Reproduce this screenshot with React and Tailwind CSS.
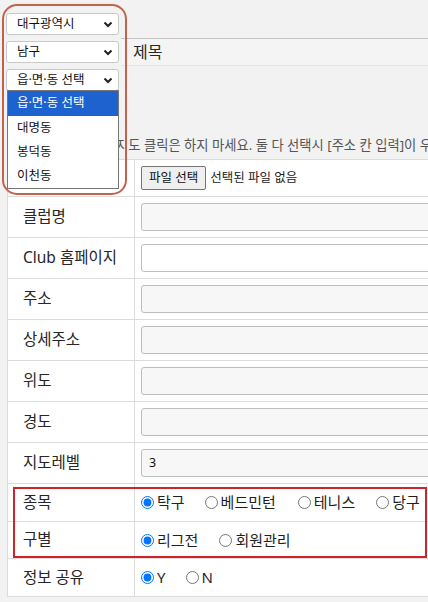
import React from "react";

const font = { fontFamily: '"Noto Sans", "Noto Sans CJK KR", sans-serif' };

const Chevron = () => (
  <svg width="10" height="7" viewBox="0 0 10 7" className="shrink-0">
    <polyline points="1.5,1.5 5,5 8.5,1.5" fill="none" stroke="#222" strokeWidth="2" />
  </svg>
);

const FakeSelect = ({ label }) => (
  <div className="flex h-[22px] w-[113px] items-center justify-between rounded-[3px] border border-[#c9c9c9] bg-white pl-[10px] pr-[5px] text-[12.5px] text-[#111]">
    <span>{label}</span>
    <Chevron />
  </div>
);

const Radio = ({ checked, label, className = "" }) => (
  <label className={`flex items-center ${className}`}>
    <input
      type="radio"
      checked={checked}
      readOnly
      className="m-0 h-[13px] w-[13px] accent-[#0075ff]"
    />
    <span className="ml-[3px] text-[15px] text-[#1f1f1f]">{label}</span>
  </label>
);

const Row = ({ label, h, children }) => (
  <div className={`flex ${h} border-b border-[#dcdcdc]`}>
    <div className="flex w-[127px] shrink-0 items-center border-r border-[#dcdcdc] pl-[15px] text-[15.5px] text-[#262626]">
      {label}
    </div>
    <div className="flex flex-1 items-center pl-[6px]">{children}</div>
  </div>
);

const TextBox = ({ value = "", white = false }) => (
  <div
    className={`flex h-[28px] w-full items-center rounded-[3px] border border-[#bdbdbd] pl-[7px] text-[12.5px] text-[#111] ${
      white ? "bg-white" : "bg-[#f7f7f7]"
    }`}
  >
    {value}
  </div>
);

export default function App() {
  return (
    <div style={font} className="relative h-[602px] w-[428px] overflow-hidden bg-[#f2f2f2]">
      {/* top area */}
      <div className="relative h-[159px]">
        <div className="flex">
          <div className="flex w-[121px] shrink-0 flex-col gap-[6px] pl-[6px] pt-[13px]">
            <FakeSelect label="대구광역시" />
            <FakeSelect label="남구" />
            <FakeSelect label="읍·면·동 선택" />
          </div>
          <div className="flex-1 pt-[38px]">
            <div className="flex h-[28px] w-[340px] items-center border-b border-t border-b-[#e2e2e2] border-t-[#c4c4c4] bg-[#f4f4f4] pl-[12px] text-[16px] text-[#262626]">
              제목
            </div>
          </div>
        </div>
        <p className="mt-[45px] whitespace-nowrap pl-[116px] text-[13.3px] leading-[18px] text-[#555]">
          지도 클릭은 하지 마세요. 둘 다 선택시 [주소 칸 입력]이 우
        </p>

        {/* open dropdown */}
        <div className="absolute left-[7px] top-[90px] z-10 w-[112px] border border-[#767676] bg-white text-[12.5px] text-[#111]">
          <div className="flex h-[25px] items-center bg-[#1e62d0] pl-[9px] text-white">읍·면·동 선택</div>
          <div className="flex h-[24px] items-center pl-[9px]">대명동</div>
          <div className="flex h-[24px] items-center pl-[9px]">봉덕동</div>
          <div className="flex h-[24px] items-center pl-[9px]">이천동</div>
        </div>
        {/* annotation */}
        <div className="pointer-events-none absolute left-[2px] top-[4px] z-20 h-[191px] w-[125px] rounded-[15px] border-2 border-[#c2634d]" />
      </div>

      {/* form table */}
      <div className="relative ml-[7px] w-[460px] border-l border-t border-[#dcdcdc] bg-white">
        <Row label="" h="h-[37px]">
          <button className="h-[24px] rounded-[2px] border border-[#767676] bg-[#efefef] px-[7px] text-[12.5px] text-[#111]">
            파일 선택
          </button>
          <span className="ml-[4px] text-[12.5px] text-[#222]">선택된 파일 없음</span>
        </Row>
        <Row label="클럽명" h="h-[41px]">
          <TextBox />
        </Row>
        <Row label="Club 홈페이지" h="h-[41px]">
          <TextBox white />
        </Row>
        <Row label="주소" h="h-[41px]">
          <TextBox />
        </Row>
        <Row label="상세주소" h="h-[41px]">
          <TextBox />
        </Row>
        <Row label="위도" h="h-[41px]">
          <TextBox />
        </Row>
        <Row label="경도" h="h-[41px]">
          <TextBox />
        </Row>
        <Row label="지도레벨" h="h-[41px]">
          <TextBox value="3" />
        </Row>
        <Row label="종목" h="h-[38px]">
          <Radio checked label="탁구" />
          <Radio label="베드민턴" className="ml-[20px]" />
          <Radio label="테니스" className="ml-[22px]" />
          <Radio label="당구" className="ml-[21px]" />
        </Row>
        <Row label="구별" h="h-[37px]">
          <Radio checked label="리그전" />
          <Radio label="회원관리" className="ml-[21px]" />
        </Row>
        <Row label="정보 공유" h="h-[38px]">
          <Radio checked label="Y" />
          <Radio label="N" className="ml-[20px]" />
        </Row>

        <div className="pointer-events-none absolute left-[5px] top-[327px] h-[71px] w-[414px] border-2 border-[#d2232a]" />
      </div>
    </div>
  );
}
